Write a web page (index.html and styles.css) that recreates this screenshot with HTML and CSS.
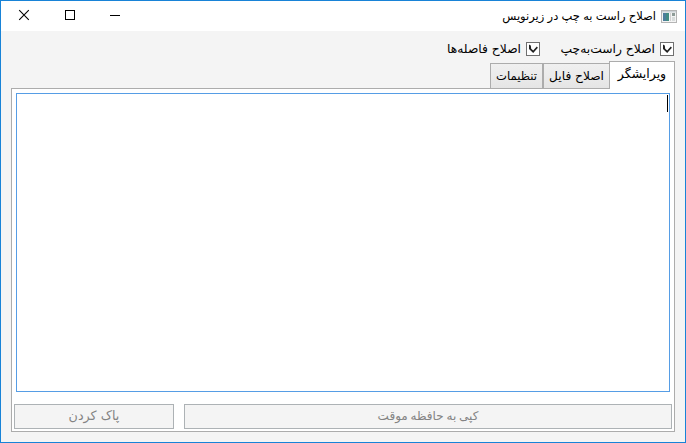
FILE: index.html
```
<!DOCTYPE html>
<html lang="fa" dir="rtl">
<head>
<meta charset="utf-8">
<title>اصلاح راست به چپ در زیرنویس</title>
<link rel="stylesheet" href="styles.css">
</head>
<body>
<div class="window">
  <header class="titlebar">
    <svg class="app-icon" width="16" height="13" viewBox="0 0 16 13">
      <rect x=".5" y=".5" width="15" height="12" fill="#f4f4f4" stroke="#b5b5b5"/>
      <rect x="1" y="1" width="14" height="1.5" fill="#ccd2d6"/>
      <rect x="2" y="3" width="6" height="8" fill="#438c83"/>
      <rect x="2" y="3" width="3" height="8" fill="#4d7e9c"/>
      <rect x="9" y="3" width="1" height="8" fill="#d0d0d0"/>
      <rect x="11" y="3" width="3" height="3" fill="#8e9c98"/>
      <rect x="11" y="7" width="3" height="4" fill="#d8dcdc"/>
    </svg>
    <span class="label title">اصلاح راست به چپ در زیرنویس</span>
    <div class="controls">
      <svg width="46" height="30" viewBox="0 0 46 30"><path d="M18 14.5h10" stroke="#000"/></svg>
      <svg width="45" height="30" viewBox="0 0 45 30"><rect x="18.5" y="9.5" width="9" height="9" fill="none" stroke="#000"/></svg>
      <svg width="46" height="30" viewBox="0 0 46 30"><path d="M18.2 9.2l9.6 9.6M27.8 9.2l-9.6 9.6" stroke="#000" stroke-width="1.1"/></svg>
    </div>
  </header>
  <div class="options">
    <label class="option first"><svg class="box" width="14" height="14" viewBox="0 0 14 14"><rect x=".5" y=".5" width="13" height="13" fill="#fff" stroke="#707070"/><path d="M3 2.5l1.8 1 .4 3.2 2 1.8 3.6-3.9 1.1 1.1L7.2 11 3 7z" fill="#212121"/></svg><span class="label">اصلاح راست‌به‌چپ</span></label>
    <label class="option second"><svg class="box" width="14" height="14" viewBox="0 0 14 14"><rect x=".5" y=".5" width="13" height="13" fill="#fff" stroke="#707070"/><path d="M3 2.5l1.8 1 .4 3.2 2 1.8 3.6-3.9 1.1 1.1L7.2 11 3 7z" fill="#212121"/></svg><span class="label">اصلاح فاصله‌ها</span></label>
  </div>
  <nav class="tabs">
    <div class="tab active"><span class="label">ویرایشگر</span></div>
    <div class="tab file"><span class="label">اصلاح فایل</span></div>
    <div class="tab settings"><span class="label">تنظیمات</span></div>
  </nav>
  <main class="pane">
    <div class="editor"><i class="caret"></i></div>
    <div class="actions">
      <button class="copy" disabled><span class="label">کپی به حافظه موقت</span></button>
      <button class="clear" disabled><span class="label">پاک کردن</span></button>
    </div>
  </main>
</div>
</body>
</html>
```
FILE: styles.css
```
* { box-sizing: border-box; }
body { margin: 0; font: 12px/18px "DejaVu Sans", sans-serif; color: #000; }
.window { width: 686px; height: 443px; border: 1px solid #1883d7; background: #f4f4f4; display: flex; flex-direction: column; }
.titlebar { height: 30px; background: #fff; display: flex; align-items: center; flex: none; padding-right: 8px; }
.label { display: inline-block; white-space: nowrap; }
.title { font-size: 11.5px; word-spacing: -.4px; }
.app-icon { margin-left: 5px; }
.controls { display: flex; margin-right: auto; }
.controls svg { display: block; }
.options { display: flex; height: 30px; padding: 11px 11px 0 0; flex: none; }
.option { display: flex; height: 14px; align-items: center; gap: 5px; font-size: 12.3px; }
.first { width: 134px; }
.box { flex: none; }
.tabs { display: flex; align-items: flex-end; height: 27px; padding-right: 10px; flex: none; }
.tab { height: 25px; border: 1px solid #acacac; border-bottom: 0; background: linear-gradient(#f0f0f0, #e5e5e5); display: flex; align-items: center; justify-content: center; }
.active { width: 66px; height: 28px; padding-bottom: 3px; font-size: 12.5px; background: #fff; margin-bottom: -1px; position: relative; z-index: 1; }
.file { width: 67px; margin-right: -1px; font-size: 12.2px; }
.settings { width: 53px; font-size: 11.6px; }
.pane { width: 664px; height: 344px; margin-right: 10px; border: 1px solid #acacac; background: #fff; padding: 4px 2px 2px; display: flex; flex-direction: column; justify-content: space-between; }
.editor { height: 299px; margin: 0 2px; border: 1px solid #569de5; padding: 1px; }
.caret { display: block; width: 1px; height: 17px; background: #000; }
.actions { display: flex; gap: 10px; }
button { height: 25px; padding: 0 0 2px; border: 1px solid #adb2b5; background: #f4f4f4; color: #838383; font: inherit; display: flex; align-items: center; justify-content: center; }
.copy { width: 488px; word-spacing: -1px; }
.clear { width: 160px; font-size: 12.7px; }
```
